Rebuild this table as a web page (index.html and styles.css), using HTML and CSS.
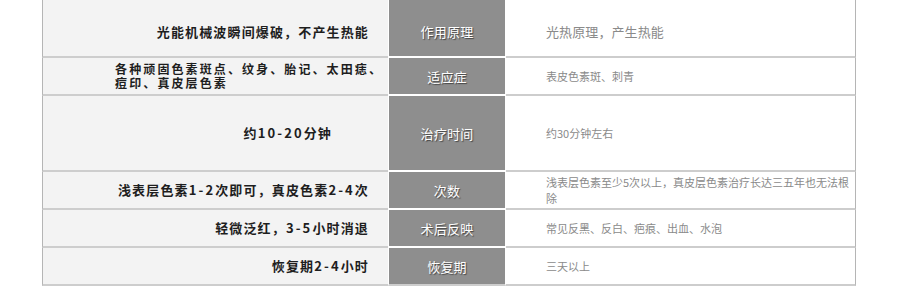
FILE: index.html
```html
<!DOCTYPE html>
<html lang="zh-CN">
<head>
    <meta charset="UTF-8">
    <meta name="viewport" content="width=device-width, initial-scale=1.0">
    <title>治疗对比</title>
    <link rel="stylesheet" href="styles.css">
</head>
<body>
    <table class="compare">
        <colgroup>
            <col class="col-ours">
            <col class="col-item">
            <col class="col-other">
        </colgroup>
        <tr class="row-first">
            <td class="ours">光能机械波瞬间爆破，不产生热能</td>
            <th class="item">作用原理</th>
            <td class="other other-big">光热原理，产生热能</td>
        </tr>
        <tr>
            <td class="ours">
                <span class="ours-block">各种顽固色素斑点、纹身、胎记、太田痣、<br>痘印、真皮层色素</span>
            </td>
            <th class="item">适应症</th>
            <td class="other">表皮色素斑、刺青</td>
        </tr>
        <tr class="row-tall">
            <td class="ours ours-short">约<span class="num">10-20</span>分钟</td>
            <th class="item">治疗时间</th>
            <td class="other">约30分钟左右</td>
        </tr>
        <tr>
            <td class="ours">浅表层色素<span class="num">1-2</span>次即可，真皮色素<span class="num">2-4</span>次</td>
            <th class="item">次数</th>
            <td class="other">浅表层色素至少5次以上，真皮层色素治疗长达三五年也无法根除</td>
        </tr>
        <tr>
            <td class="ours">轻微泛红，<span class="num">3-5</span>小时消退</td>
            <th class="item">术后反映</th>
            <td class="other">常见反黑、反白、疤痕、出血、水泡</td>
        </tr>
        <tr class="row-last">
            <td class="ours">恢复期<span class="num">2-4</span>小时</td>
            <th class="item">恢复期</th>
            <td class="other">三天以上</td>
        </tr>
    </table>
</body>
</html>
```

FILE: styles.css
```css
body {
    margin: 0;
    background-color: #fff;
    font-family: "Noto Sans CJK SC", "Noto Sans", sans-serif;
}
.compare {
    width: 814px;
    margin-left: 42px;
    table-layout: fixed;
    border-collapse: separate;
    border-spacing: 0;
}
.col-ours {
    width: 346px;
}
.col-item {
    width: 118px;
}
.col-other {
    width: 350px;
}
.compare tr {
    height: 38px;
}
.compare .row-first {
    height: 58px;
}
.compare .row-tall {
    height: 76px;
}
.compare td,
.compare th {
    box-sizing: border-box;
    padding: 0;
    vertical-align: middle;
}
.row-first td,
.row-first th {
    padding-top: 7px;
}

/* left column: our treatment */
.ours {
    background-color: #f3f3f3;
    border-left: 1px solid #b5b5b5;
    border-bottom: 2px solid #cdcdcd;
    padding-right: 19px !important;
    text-align: right;
    font-size: 13px;
    font-weight: bold;
    letter-spacing: 1.15px;
    line-height: 14px;
    color: #1e1e1e;
}
.ours .num {
    letter-spacing: 2.1px;
}
.ours-short {
    padding-right: 56px !important;
}
.ours-block {
    display: inline-block;
    margin-right: -14px;
    font-size: 12px;
    line-height: 13.5px;
    letter-spacing: 2.1px;
    text-align: left;
}

/* middle column: item label */
.item {
    background-color: #8e8e8e;
    border-left: 1px solid #fff;
    border-right: 1px solid #fff;
    border-bottom: 2px solid #fff;
    text-align: center;
    font-size: 13px;
    font-weight: normal;
    letter-spacing: 0.2px;
    color: #fff;
    text-shadow: 1px 1px 1px #444;
}
.row-last .item {
    border-bottom-color: #cdcdcd;
}

/* right column: other treatments */
.other {
    background-color: #fff;
    border-right: 1px solid #b5b5b5;
    border-bottom: 2px solid #cdcdcd;
    padding-left: 40px !important;
    text-align: left;
    font-size: 11px;
    line-height: 16px;
    color: #8a8a8a;
}
.other-big {
    font-size: 13px;
    letter-spacing: 0.1px;
}
```
